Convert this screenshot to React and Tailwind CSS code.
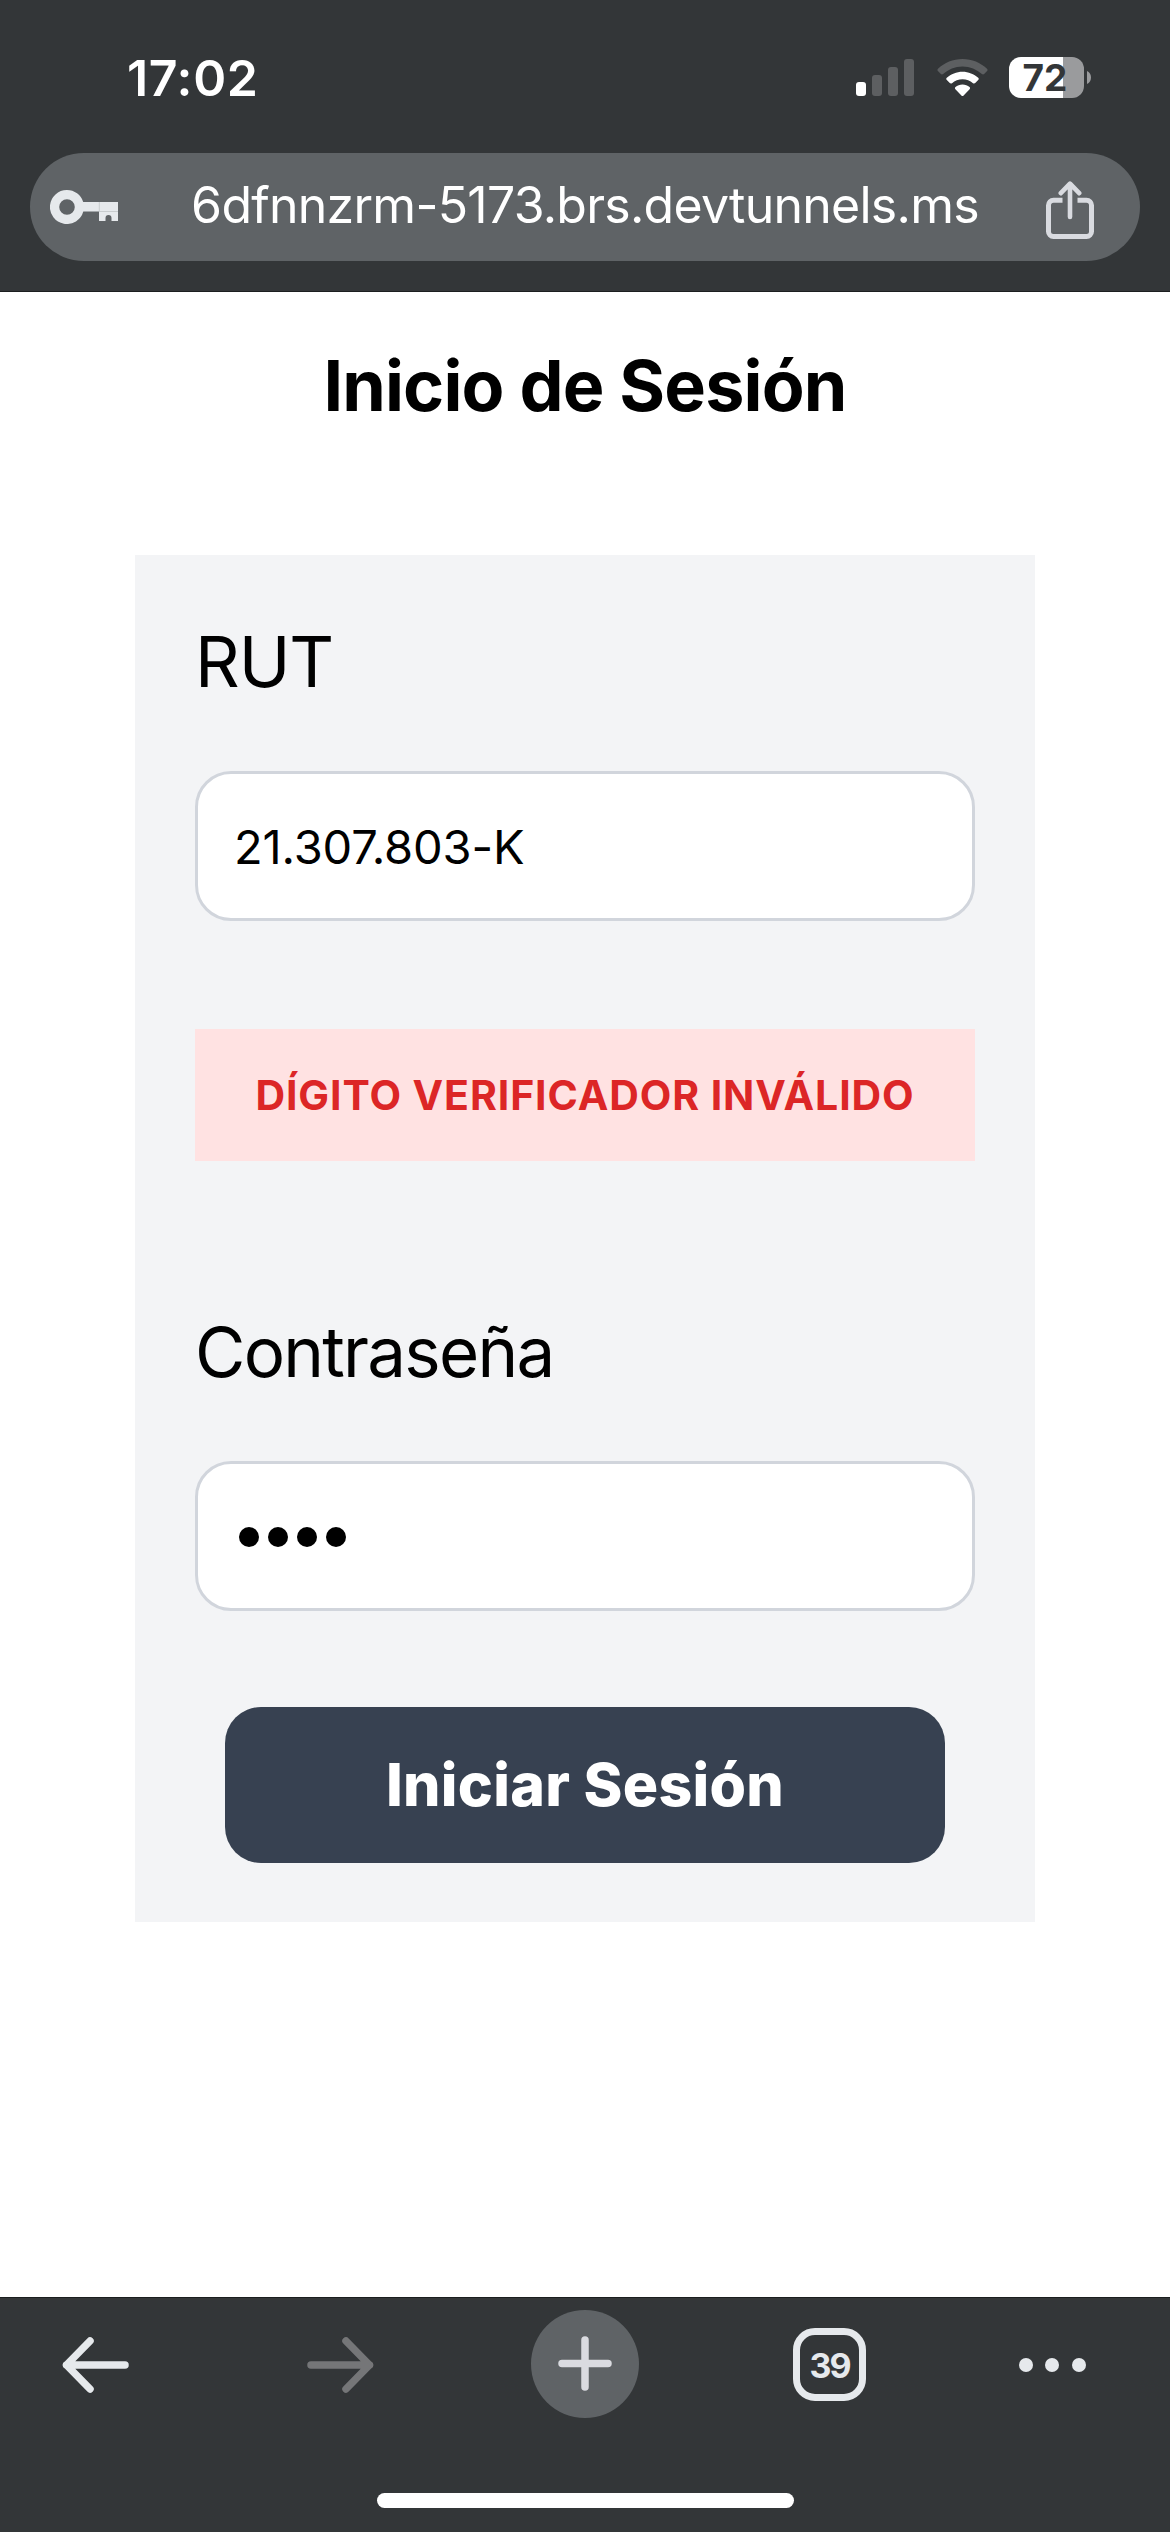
function SignalIcon() {
  return (
    <svg width="58" height="38" viewBox="0 0 58 38" fill="#5d5f61">
      <rect x="0" y="23" width="10" height="14" rx="3" fill="#fff" />
      <rect x="16" y="16" width="10" height="21" rx="3" />
      <rect x="32" y="8" width="10" height="29" rx="3" />
      <rect x="48" y="0" width="10" height="37" rx="3" />
    </svg>
  );
}

function WifiIcon() {
  return (
    <svg width="51" height="38" viewBox="0 0 51 38" fill="#fff">
      <path
        d="M25.5 0C35 0 43.500 3.700 50 9.700c.7.700.7 1.600.1 2.300l-3 3c-.6.600-1.500.600-2.200 0C39.800 10.300 33 7.400 25.500 7.400S11.200 10.300 6.100 15c-.7.600-1.600.600-2.200 0l-3-3c-.6-.700-.6-1.600.1-2.300C7.500 3.700 16 0 25.500 0z"
        fill="#5d5f61"
      />
      <path d="M25.500 12.700c6 0 11.500 2.300 15.700 6.100.7.600.7 1.600 0 2.300l-3 3c-.6.600-1.500.600-2.200.1-2.800-2.500-6.500-4-10.500-4s-7.700 1.500-10.500 4c-.7.500-1.600.500-2.200-.1l-3-3c-.7-.700-.7-1.700 0-2.300 4.200-3.800 9.700-6.100 15.700-6.100z" />
      <path d="M25.500 25.500c2.700 0 5.200 1 7 2.600.7.600.7 1.500.1 2.200l-6 6.200c-.6.700-1.600.700-2.200 0l-6-6.200c-.6-.700-.6-1.600.1-2.200 1.800-1.600 4.300-2.600 7-2.600z" />
    </svg>
  );
}

function Battery() {
  return (
    <div className="flex items-center">
      <div className="flex h-[41px] w-[75px] items-center justify-center rounded-[12px] bg-[linear-gradient(to_right,#fff_54px,#9a9b9d_54px)] pr-[3px] text-[37px] leading-[48px] font-bold text-[#333638]">
        72
      </div>
      <svg className="ml-[3px]" width="4" height="13" viewBox="0 0 4 13">
        <path d="M0 0c2.400.9 4 3.400 4 6.500S2.400 12.100 0 13z" fill="#9a9b9d" />
      </svg>
    </div>
  );
}

function KeyIcon() {
  return (
    <svg width="68" height="34" viewBox="0 0 68 34" fill="#e6e9ec">
      <path
        fillRule="evenodd"
        d="M17 0a17 17 0 0 1 16.200 12H68v19h-6.500v-3a3 3 0 0 0-6 0v3H49v-9.500H33.300A17 17 0 1 1 17 0zm0 9.200a7.800 7.800 0 1 0 0 15.600 7.800 7.800 0 0 0 0-15.600z"
      />
      <path d="M49.300 12v9.500H68" fill="none" stroke="#b4b8bb" strokeWidth="0.600" />
    </svg>
  );
}

function ShareIcon() {
  return (
    <svg
      width="48"
      height="58"
      viewBox="0 0 48 58"
      fill="none"
      stroke="#d9dbe0"
      strokeWidth="5"
    >
      <path d="M16.500 19.300H7.500a5 5 0 0 0-5 5v26.200a5 5 0 0 0 5 5h33a5 5 0 0 0 5-5V24.300a5 5 0 0 0-5-5h-9" />
      <path
        d="M24 36V3M14.800 12.200L24 2.600l9.200 9.600"
        strokeLinecap="round"
        strokeLinejoin="round"
        strokeWidth="4.600"
      />
    </svg>
  );
}

function ArrowIcon({ className }) {
  return (
    <svg
      className={className}
      width="67"
      height="56"
      viewBox="0 0 67 56"
      fill="none"
      stroke="currentColor"
      strokeWidth="7.500"
      strokeLinecap="round"
      strokeLinejoin="round"
    >
      <path d="M63 28H4.500M28 4L4.500 28 28 52" />
    </svg>
  );
}

function StatusBar() {
  return (
    <div className="flex h-[153px] items-start justify-between pt-[57px] pr-[79px] pl-[127px]">
      <div className="text-[50px] leading-[42px] font-semibold tracking-[0.650px] text-white">
        17:02
      </div>
      <div className="flex h-[41px] items-center">
        <SignalIcon />
        <div className="ml-[22.500px]">
          <WifiIcon />
        </div>
        <div className="ml-[21.500px]">
          <Battery />
        </div>
      </div>
    </div>
  );
}

function AddressBar() {
  return (
    <div className="mx-[30px] grid h-[108px] grid-cols-[140px_1fr_140px] items-center rounded-full bg-[#5f6366]">
      <div className="pl-5">
        <KeyIcon />
      </div>
      <div className="pb-[4px] text-center text-[50px] leading-[100px] tracking-[-0.740px] whitespace-nowrap text-white">
        6dfnnzrm-5173.brs.devtunnels.ms
      </div>
      <div className="flex justify-end pt-[5px] pr-[46px]">
        <ShareIcon />
      </div>
    </div>
  );
}

function LoginForm() {
  return (
    <form className="mx-[135px] mt-[98px] flex h-[1367px] flex-col bg-gray-100 px-[60px] pt-[57px]">
      <label className="h-[100px] text-[69.500px] leading-[100px] tracking-[-1.100px]">RUT</label>
      <div className="mt-[59px] h-[150px] rounded-[36px] border-3 border-gray-300 bg-white pl-[36px] text-[47px] leading-[146px] tracking-[-0.130px]">
        21.307.803-K
      </div>
      <div className="mt-[108px] h-[132px] bg-red-100 text-center text-[41px] leading-[132px] font-bold tracking-[0.910px] whitespace-nowrap text-[#dc2626] uppercase">
        Dígito verificador inválido
      </div>
      <label className="mt-[141px] h-[100px] text-[69px] leading-[100px] tracking-[-1.750px]">
        Contraseña
      </label>
      <div className="mt-[59px] flex h-[150px] items-center gap-[9px] rounded-[36px] border-3 border-gray-300 bg-white pt-[2px] pl-[41px]">
        <span className="size-5 rounded-full bg-black" />
        <span className="size-5 rounded-full bg-black" />
        <span className="size-5 rounded-full bg-black" />
        <span className="size-5 rounded-full bg-black" />
      </div>
      <button
        type="button"
        className="mx-[30px] mt-24 h-[156px] rounded-[36px] bg-[#374151] text-center text-[59px] leading-[156px] font-extrabold tracking-[0.280px] text-white"
      >
        Iniciar Sesión
      </button>
    </form>
  );
}

function Toolbar() {
  return (
    <footer className="flex h-[235px] flex-col items-center border-t border-[#1c1e1f] bg-[#333638]">
      <div className="flex h-[131px] w-full items-center pl-[62px]">
        <div className="pt-[2px] text-[#e6e9ec]">
          <ArrowIcon />
        </div>
        <div className="ml-[178px] pt-[2px] text-[#757678]">
          <ArrowIcon className="-scale-x-100" />
        </div>
        <div className="ml-[157px] flex size-[108px] items-center justify-center rounded-full bg-[#5f6366]">
          <svg
            width="54"
            height="55"
            viewBox="0 0 54 55"
            stroke="#dadbe0"
            strokeWidth="7.500"
            strokeLinecap="round"
          >
            <path d="M27 4v47M4 27.500h46" />
          </svg>
        </div>
        <div className="mt-[2px] ml-[154px] flex size-[73px] items-center justify-center rounded-[22px] border-[7px] border-[#e6e9ec] pt-[3px] text-[34px] leading-none font-bold tracking-[-2px] text-[#e6e9ec]">
          39
        </div>
        <div className="ml-[153px] flex gap-[12.300px] pt-[2px]">
          <span className="size-[14px] rounded-full bg-[#e6e9ec]" />
          <span className="size-[14px] rounded-full bg-[#e6e9ec]" />
          <span className="size-[14px] rounded-full bg-[#e6e9ec]" />
        </div>
      </div>
      <div className="mt-16 h-[15px] w-[417px] rounded-full bg-white" />
    </footer>
  );
}

export default function App() {
  return (
    <div className="flex h-[2532px] w-[1170px] flex-col bg-white font-[Inter,sans-serif] text-black">
      <header className="h-[292px] border-b border-[#1c1e1f] bg-[#333638]">
        <StatusBar />
        <AddressBar />
      </header>
      <main className="flex-1">
        <h1 className="mt-[30px] h-[135px] text-center text-[70px] leading-[127px] font-bold tracking-[-0.830px]">
          Inicio de Sesión
        </h1>
        <LoginForm />
      </main>
      <Toolbar />
    </div>
  );
}
